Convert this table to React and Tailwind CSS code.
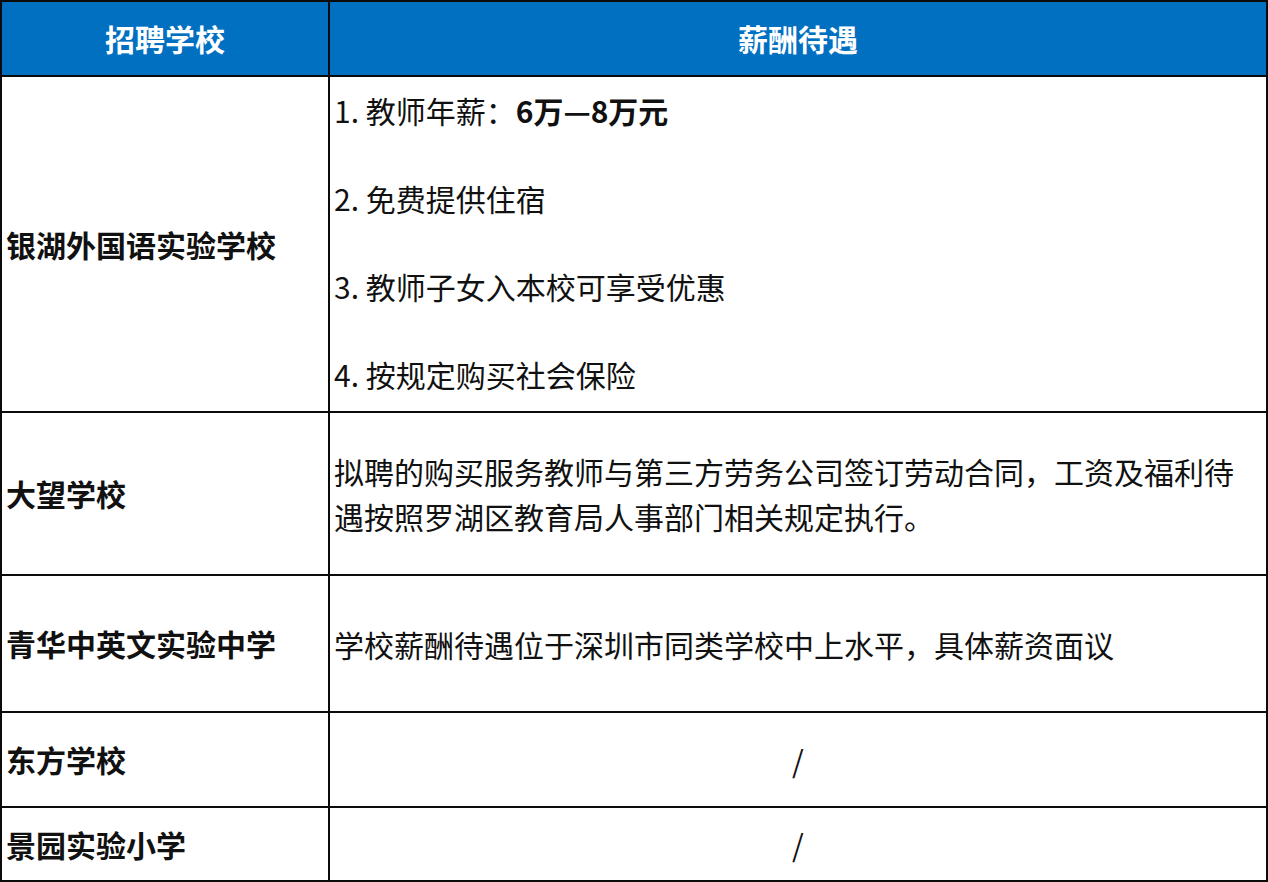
import React from "react";

const font = { fontFamily: '"Noto Sans CJK SC", "Microsoft YaHei", sans-serif' };

function Row({ h, left, children, center, last }) {
  return (
    <div className={`flex ${h} ${last ? "" : "border-b-2 border-[#0b0b0b]"}`}>
      <div className="w-[328px] shrink-0 border-r-2 border-[#0b0b0b] flex items-center pl-[4px] text-[30px] font-bold text-[#111]">
        {left}
      </div>
      <div className={`flex-1 flex flex-col justify-center ${center ? "items-center" : "pl-[4px]"} text-[30px] text-[#111]`}>
        {children}
      </div>
    </div>
  );
}

export default function App() {
  return (
    <div
      className="w-[1268px] h-[882px] bg-white border-2 border-[#0b0b0b] flex flex-col"
      style={font}
    >
      <div className="flex h-[75px] bg-[#0170c1] border-b-2 border-[#0b0b0b] text-white font-bold text-[30px]">
        <div className="w-[328px] shrink-0 border-r-2 border-[#0b0b0b] flex items-center justify-center">
          招聘学校
        </div>
        <div className="flex-1 flex items-center justify-center">薪酬待遇</div>
      </div>

      <Row h="h-[336px]" left="银湖外国语实验学校">
        <div className="flex flex-col gap-[44px] leading-[44px] pb-[4px]">
          <div>
            1. 教师年薪：<span className="font-bold">6万—8万元</span>
          </div>
          <div>2. 免费提供住宿</div>
          <div>3. 教师子女入本校可享受优惠</div>
          <div>4. 按规定购买社会保险</div>
        </div>
      </Row>

      <Row h="h-[163px]" left="大望学校">
        <div className="leading-[45px] pr-[20px]">
          拟聘的购买服务教师与第三方劳务公司签订劳动合同，工资及福利待遇按照罗湖区教育局人事部门相关规定执行。
        </div>
      </Row>

      <Row h="h-[137px]" left="青华中英文实验中学">
        <div className="leading-[44px]">学校薪酬待遇位于深圳市同类学校中上水平，具体薪资面议</div>
      </Row>

      <Row h="h-[95px]" left="东方学校" center>
        <div className="leading-[44px]">/</div>
      </Row>

      <Row h="h-[72px]" left="景园实验小学" center last>
        <div className="leading-[44px]">/</div>
      </Row>
    </div>
  );
}
